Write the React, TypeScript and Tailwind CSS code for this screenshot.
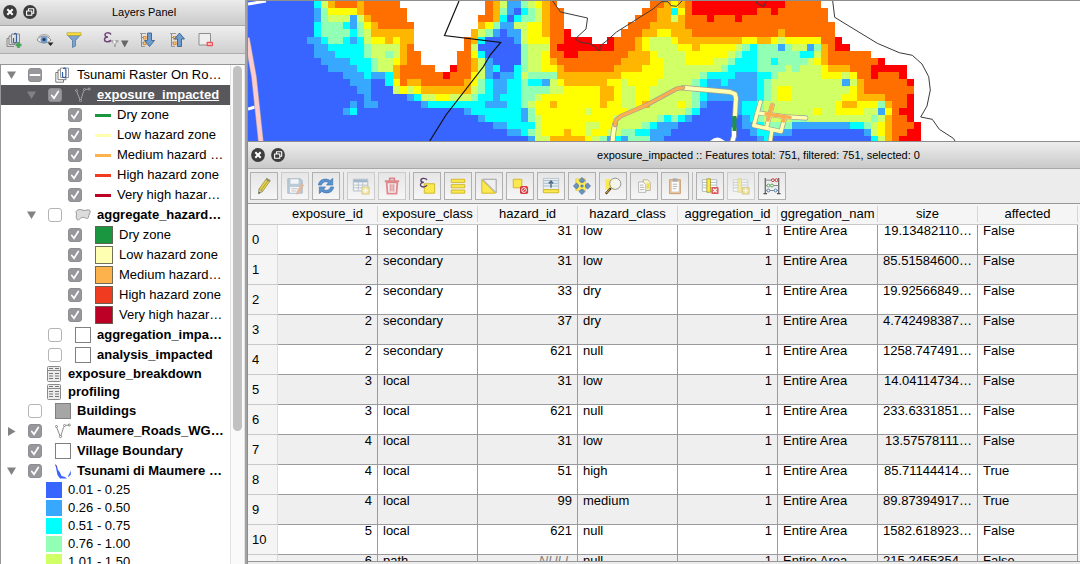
import React from "react";

/* ---------- Map ---------- */

const PALETTE: Record<string, string> = {
  B: "#3864ff",
  b: "#38a8ff",
  c: "#00ffff",
  g: "#91ffb4",
  l: "#d0ff66",
  y: "#ffff00",
  o: "#ffb600",
  O: "#ff6f00",
  r: "#ff0000",
  w: "#ffffff",
};

/* Run-length rows of the hazard raster: colour key followed by cell count. */
const RASTER: string[] = [
  "B1c1l1o1O3o1O5w12O1o1l1b2 g1l1y1o1O1w13O2o1y1o1O1r13O1 O4",
  "B1b1g1y4o1O6w11O1o1g1b1B1 c1g1l1o1O2w11O2o2c1y1O1r9O2r1O2 O5",
  "B1b1g1l3b1l1o1O5w10O2o1c1B1c1 g2l1o1O2w10O3o2l1o1O3r1O3r1O7 O5",
  "B1c1g3c1b1g1y1o1O5w9o1y1g1b2l1 l1y2o1O2w9O3o5O15 O6",
  "B1c1g4c1g1l1o6w8o1l1g1b1B1b2 l1y2o1O2r1w7O3o2y2o3O12o1O1 O6",
  "b2c1g2c1b1c1l1y2o1y1o2w7O1o1c1B4b1 l1y3O2r4w2r1O3o1y1l3y1o9y2o2y1l1y1 y4O2r1",
  "B1b2c5g1l4o1O1w7O1l1B6 g1l3O1r8O3o1y1l4y2o1y5l1g1c1g3b1g1 l2b1g1o1O1r2",
  "B1b3c4g1l2g1l1o1O2w5O2y1c1B5 g1l2y1O2r2O7o3y1l4y6l1g1c2g5 g1c2l1o1O6",
  "B2b4c3g1l2y1o1O2w5O2o1l1b1B4 g1l2y1o1O9o4y2l3y4l2g1c3g2c1g2 g2l1y1o1O7r1",
  "B3b4c2g1l2o1O5w2r1O2o1l1b1c1B2c1 g1l2y2o1O7o4y3l8g1c4g4l1 g1l3y1o3O3r5",
  "B5b3c1b2c1o1O6r1O3y1l1b1B1b2c1 l1g4o9y6l5g1c4b3c2g1l2 l4y3l1y1O2r1O3r1",
  "B6b3B2c1y1O1o2O6o1y1g1c1b2c2 g1c2b1l1y1o6y2l1y4l5g1c1b2c1b4c1g1l3 l7b1l1o1O6r1",
  "B7b2B3l1y1l1y1o7l1g1c1b2c2 g4l2y5o2y1l2y2l6g1c1b7c1g1l1y2 l8y1o1O7",
  "B8b1B5b1c1l2y2l3g1c2b1c3 g2l1y8o2y1l2y2l6g1c1b7c1g1l1y2 l7y2o4O3r1",
  "B6b1B1b2B6b1c8b3c2 g1l1y2o1y6o1y2l2y1o1l4y1l1g1b1B4b1c2g1l4 l6y1o2y3g1o1O2r1",
  "B5b1c1B15b1c7 b1g1y7l1y5l8g1c1B5b1c2g1l4 l3y1l2y4l2b1y1O1r2",
  "B24b1c5 b1g1l1y8y2l6g1c1g1c1b1B7b1c1g1l4 g2l9g1l1o1O2r1",
  "B26b2c2 c2l1y6l2y2l4g1c1b3B8B1b2c1g4 b8c2g1l1y1o1O3r1",
  "B28b2 c1g1l1y3o1y2l1y2l2g2c2b3B9B2b1c2b3 B10b1l1y1o1O2r2",
  "B30 B1b1l2o5y1l1g1b1c1b1g3b2B10B3b1c1B3 B11c1l1o1O1r3",
];

const CELL = 7.14;

function Raster() {
  const rects: React.ReactElement[] = [];
  RASTER.forEach((row, r) => {
    const top = Math.round(1 + r * 7.12);
    const bottom = Math.round(1 + (r + 1) * 7.12);
    let k = -1;
    for (const m of row.matchAll(/([A-Za-z])(\d+)/g)) {
      const n = Number(m[2]);
      const left = Math.round(314 + k * CELL);
      const right = Math.round(314 + (k + n) * CELL);
      rects.push(
        <rect key={`${r}-${k}`} x={left} y={top} width={right - left} height={bottom - top} fill={PALETTE[m[1]]} />
      );
      k += n;
    }
  });
  return <g shapeRendering="crispEdges">{rects}</g>;
}

function Road({ points, color, width = 4 }: { points: string; color: string; width?: number }) {
  return (
    <g fill="none" strokeLinejoin="round" strokeLinecap="round">
      <polyline points={points} stroke="#a5a08c" strokeWidth={width + 1.5} />
      <polyline points={points} stroke={color} strokeWidth={width} />
    </g>
  );
}

const LANES = "M760.3 102L753.8 125.5L781 131.5L785 117M757 112.7L785 116.7L806 118M771.7 131L770 143M772.3 105L766.7 127";

function MapCanvas() {
  return (
    <div className="h-[142px] shrink-0 overflow-hidden border-t border-b border-[#8e8e8e] bg-white">
      <svg className="block h-[140px] w-[832px]" viewBox="248 1 832 140" role="img" aria-label="Hazard map">
        <rect x="248" y="1" width="60" height="140" fill="#3864ff" />
        <Raster />
        <path d="M248 4L266 1" stroke="#fff" strokeWidth="3" />
        <path d="M248 109L255 107" stroke="#fff" strokeWidth="3" />
        <polyline points="247,38 254,77 261,143" fill="none" stroke="#a9a3b8" strokeWidth="5.5" />
        <polyline points="247,38 254,77 261,143" fill="none" stroke="#ffcccc" strokeWidth="4.2" />
        <g fill="none" stroke="#111" strokeWidth="1.2">
          <polyline points="459,1 444.5,35.5 500.7,42.5 490.5,54.5 483.5,66.5 446,115 429.7,141" />
        </g>
        <g fill="none" stroke="#3b3b3b" strokeWidth="1">
          <polyline points="552.7,1 560.5,12 587.5,18 586,29 575,39 581,42.5 589,43.5 596,47 597.5,50.3 600,50.3 600,46 607,40.5 616.5,32 653,9 661.5,1.7 668,1.7 671,5.7 676.5,6.3 682,1" />
          <polyline points="756,1 757,3.5 763.7,6.7 766,1" />
          <polyline points="832.7,1 834.7,17.3 877.3,43.3 899.3,52.7 912.3,55.3 922,64 928.7,76.7 930.3,90 927,106 920.7,117 932.3,119.3 939.3,129.3 953.3,138.3 955,141" />
        </g>
        <path d="M710 141q5-5 10-3l5 3z" fill="#fff" />
        <Road points="734,129 734,136 732,143" color="#ffffff" />
        <Road points="612.5,143 613.5,132 615,124" color="#ffffb2" />
        <Road points="683,87.7 730,92 735,94 736,98 735,116" color="#ffffb2" />
        <Road points="615,125 616,120 621,116 646.7,105 676.7,88.8 683,87.7" color="#fdae52" width={3} />
        <path d="M734.5 116V131" stroke="#1a9641" strokeWidth="4" />
        <g fill="none" strokeLinejoin="round" strokeLinecap="round">
          <path d={LANES} stroke="#a5a08c" strokeWidth="4.8" />
          <path d={LANES} stroke="#ffffb2" strokeWidth="3.4" />
          <path d="M772.3 105L768 120M766 114L790 117.4M784.5 117L783.5 121" stroke="#fdae52" strokeWidth="3.4" />
        </g>
      </svg>
    </div>
  );
}

/* ---------- Shared title bar ---------- */

function TitleBar({ title, className }: { title: string; className: string }) {
  return (
    <header className="flex h-[26px] shrink-0 items-center gap-[6px] border-b border-[#a8a8a8] bg-linear-to-b from-[#ececec] to-[#c9c9c9] pb-px pl-[3px]">
      <button aria-label={`Close ${title}`} className="size-[14px] shrink-0">
        <svg viewBox="0 0 14 14" className="size-[14px]">
          <circle cx="7" cy="7" r="6.9" fill="#3d3d3d" />
          <path d="M4.3 4.3l5.400 5.400m0-5.400l-5.400 5.400" stroke="#fff" strokeWidth="2" />
        </svg>
      </button>
      <button aria-label={`Undock ${title}`} className="size-[14px] shrink-0">
        <svg viewBox="0 0 14 14" className="size-[14px]">
          <circle cx="7" cy="7" r="6.9" fill="#3d3d3d" />
          <path d="M5.5 5.8V3.8h5.2v4.4H9M3.6 6h5.2v4.2H3.6z" fill="none" stroke="#fff" strokeWidth="1.1" strokeLinejoin="round" />
        </svg>
      </button>
      <h2 className={`min-w-0 flex-1 truncate text-center text-[11px] leading-[14px] ${className}`}>{title}</h2>
    </header>
  );
}

/* ---------- Layers panel ---------- */

type IconKind = "group" | "vector" | "blob" | "table" | "raster" | "line" | "swatch" | "box";
type Layer = {
  name: string;
  level: 0 | 1 | 2;
  icon: IconKind;
  color?: string;
  bold?: boolean;
  selected?: boolean;
  arrow?: "down" | "right";
  check: "on" | "off" | "mixed";
};

const LAYERS: Layer[] = [
  { name: "Tsunami Raster On Ro…", level: 0, icon: "group", arrow: "down", check: "mixed" },
  { name: "exposure_impacted", level: 1, icon: "vector", bold: true, selected: true, arrow: "down", check: "on" },
  { name: "Dry zone", level: 2, icon: "line", color: "#1a9641", check: "on" },
  { name: "Low hazard zone", level: 2, icon: "line", color: "#ffffb2", check: "on" },
  { name: "Medium hazard …", level: 2, icon: "line", color: "#feb24c", check: "on" },
  { name: "High hazard zone", level: 2, icon: "line", color: "#f03b20", check: "on" },
  { name: "Very high hazar…", level: 2, icon: "line", color: "#bd0026", check: "on" },
  { name: "aggregate_hazard…", level: 1, icon: "blob", bold: true, arrow: "down", check: "off" },
  { name: "Dry zone", level: 2, icon: "swatch", color: "#1a9641", check: "on" },
  { name: "Low hazard zone", level: 2, icon: "swatch", color: "#ffffb2", check: "on" },
  { name: "Medium hazard…", level: 2, icon: "swatch", color: "#feb24c", check: "on" },
  { name: "High hazard zone", level: 2, icon: "swatch", color: "#f03b20", check: "on" },
  { name: "Very high hazar…", level: 2, icon: "swatch", color: "#bd0026", check: "on" },
  { name: "aggregation_impa…", level: 1, icon: "box", color: "#ffffff", bold: true, check: "off" },
  { name: "analysis_impacted", level: 1, icon: "box", color: "#ffffff", bold: true, check: "off" },
];

const BASE_LAYERS: Layer[] = [
  { name: "Buildings", level: 0, icon: "box", color: "#a6a6a6", bold: true, check: "off" },
  { name: "Maumere_Roads_WG…", level: 0, icon: "vector", bold: true, arrow: "right", check: "on" },
  { name: "Village Boundary", level: 0, icon: "box", color: "#ffffff", bold: true, check: "on" },
  { name: "Tsunami di Maumere …", level: 0, icon: "raster", bold: true, arrow: "down", check: "on" },
];

const CLASSES = [
  { label: "0.01 - 0.25", color: "#3864ff" },
  { label: "0.26 - 0.50", color: "#38a8ff" },
  { label: "0.51 - 0.75", color: "#00ffff" },
  { label: "0.76 - 1.00", color: "#91ffb4" },
  { label: "1.01 - 1.50", color: "#d0ff66" },
];

function LayerIcon({ kind, color, selected }: { kind: IconKind; color?: string; selected?: boolean }) {
  const ink = selected ? "#a9a9a9" : "#808080";
  return (
    <svg
      viewBox={kind === "swatch" ? "0 0 18 18" : "0 0 16 16"}
      className={kind === "swatch" ? "size-[18px] shrink-0" : "size-4 shrink-0"}
      aria-hidden="true"
    >
      {kind === "group" && (
        <g fill="none">
          <path d="M3 5.500H.8v9.700h7.700V13M5.500 3H3v9.700h8V10.500" stroke="#777" />
          <path d="M5.500 1h8v9.500h-8z" stroke="#999" />
          <path d="M7.500 5v4a1.700 1.700 0 003.400 0V2.800C10.900.8 8.800.8 8.500 2" stroke="#2c5caa" strokeWidth="1.200" />
        </g>
      )}
      {kind === "vector" && (
        <g fill="none" stroke={ink} strokeWidth=".9">
          <path d="M1.500 4L5.500 14L8.500 4.500L10 2.500L14 2" />
          <g fill={selected ? "#58575c" : "#fff"}>
            <circle cx="1.500" cy="3.500" r="1" />
            <circle cx="5.500" cy="13.500" r="1.100" />
            <circle cx="9.500" cy="2.500" r="1" />
            <circle cx="14.300" cy="2" r="1" />
          </g>
        </g>
      )}
      {kind === "blob" && (
        <path d="M1 4.500C2 2.500 5 2 8 3.200S13 1.500 15 3.500C16 6 13 8 13.500 10.500C12 13 9.500 9.500 7 10.500S3.500 14 2 12.500C0 10 2.500 8 1 4.500z" fill="#dcdcdc" stroke="#999" />
      )}
      {kind === "raster" && (
        <g fill="#3864ff">
          <path d="M.3 1.500L2 3l.8 3.500L5 9.500l1.500 3.500 3.500 1 2 1.500H5L2.500 12z" />
          <path d="M13 13l1-1.500 1.800-4v4L13.500 14z" />
          <path d="M.3 1.500L1.800 4" stroke="#8c3b4a" strokeWidth=".8" />
        </g>
      )}
      {kind === "line" && <rect x="0" y="7" width="16" height="3" fill={color} />}
      {kind === "box" && <rect x=".5" y=".5" width="15" height="15" fill={color} stroke="#808080" />}
      {kind === "swatch" && <rect x=".5" y=".5" width="17" height="17" fill={color} stroke="#4d4d3d" strokeOpacity=".8" />}
      {kind === "table" && (
        <g>
          <rect x="1.500" y=".5" width="13" height="15" rx="1" fill="#ececec" stroke="#8a8a8a" />
          <path d="M2 4.500h12" stroke="#8a8a8a" />
          <path d="M3 2.500h4M9 2.500h4M3 7.500h4M9 7.500h4M3 10h4M9 10h4M3 12.500h4M9 12.500h4" stroke="#777" />
        </g>
      )}
    </svg>
  );
}

function CheckBox({ state, label }: { state: Layer["check"]; label: string }) {
  return (
    <span className="relative size-[14px] shrink-0">
      <input
        type="checkbox"
        aria-label={label}
        defaultChecked={state !== "off"}
        className="block size-[14px] appearance-none rounded-[3px] border border-[#b4b4b4] bg-white checked:border-[#8e8d92] checked:bg-[#98979c]"
      />
      {state !== "off" && (
        <svg viewBox="0 0 14 14" className="pointer-events-none absolute inset-0 size-[14px]" aria-hidden="true">
          <path
            d={state === "on" ? "M3.800 7.500L6 10.200L10.300 3.500" : "M2.500 7h9"}
            fill="none"
            stroke="#fff"
            strokeWidth={state === "on" ? 1.7 : 2}
            strokeLinecap="round"
          />
        </svg>
      )}
    </span>
  );
}

const INDENT = ["pl-[5px]", "pl-[25px]", "pl-[45px]"];

function LayerRow({ layer }: { layer: Layer }) {
  return (
    <li className={`flex h-5 items-center ${INDENT[layer.level]} ${layer.selected ? "bg-[#58575c] text-white" : ""}`}>
      <span className="w-[22px] shrink-0">
        {layer.arrow && (
          <button aria-label={`Toggle ${layer.name}`} className="block size-[11px]">
            <svg viewBox="0 0 11 11" className="size-[11px]">
              <path d={layer.arrow === "down" ? "M1 1.500h9L5.500 9z" : "M2 1l7.500 4.500L2 10z"} fill="#828282" />
            </svg>
          </button>
        )}
      </span>
      <CheckBox state={layer.check} label={layer.name} />
      <span className="w-[13px] shrink-0" />
      <LayerIcon kind={layer.icon} color={layer.color} selected={layer.selected} />
      <span className={`pl-[6px] whitespace-nowrap ${layer.bold ? "font-bold" : ""} ${layer.selected ? "underline" : ""}`}>{layer.name}</span>
    </li>
  );
}

function Arrow({ up }: { up?: boolean }) {
  return (
    <svg viewBox="0 0 16 16" className="size-4" aria-hidden="true">
      <path d="M2.500 1v13M2.500 5.500h2M2.500 11h2" stroke="#8a8a8a" fill="none" />
      <path d="M1 1.500h6M2 14.500h4" stroke="#999" />
      <rect x="4.500" y="4.500" width="2.500" height="2.500" fill="#fbd08a" stroke="#f08a1d" />
      <rect x="4.500" y="10" width="2.500" height="2.500" fill="#fbd08a" stroke="#f08a1d" />
      <path
        d={up ? "M10.500 1L15.500 7h-3v7.500h-4V7h-3z" : "M8.500 1h4v7.500h3L10.500 14.500L5.500 8.500h3z"}
        fill="#6f9bcd"
        stroke="#38628f"
        strokeWidth=".9"
      />
    </svg>
  );
}

function LayerToolbar() {
  return (
    <div className="flex h-[28px] shrink-0 items-center border-b border-[#aeaeae] bg-linear-to-b from-[#efefef] to-[#cfcfcf] pl-[6px]">
      <button aria-label="Add group" className="w-[30px]">
        <svg viewBox="0 0 16 16" className="size-4">
          <path d="M3 6.500H1v8h7M5.500 4H3v8.500h6M5.500 2h8v9h-8z" fill="none" stroke="#888" />
          <path d="M7.500 6v3.500a1.500 1.500 0 003 0V3C10.500 1 8.300 1 8.300 2.500" fill="none" stroke="#3a5f99" strokeWidth="1.200" />
          <path d="M12.500 10v6M9.500 13h6" stroke="#4aa35a" strokeWidth="2.600" />
        </svg>
      </button>
      <button aria-label="Manage visibility" className="w-[30px]">
        <svg viewBox="0 0 18 16" className="h-4 w-[18px]">
          <path d="M1 8c3-5 10-5.500 14 0-4 4-10 4-14 0z" fill="#eee" stroke="#888" />
          <circle cx="8" cy="7.700" r="3.500" fill="#6b9bcc" />
          <circle cx="8" cy="7.500" r="1.600" fill="#29384e" />
          <path d="M2 5.500C5 1.500 11 1.500 14 5" fill="none" stroke="#aaa" />
          <path d="M11.500 10.500h6L14.500 14z" fill="#222" />
        </svg>
      </button>
      <button aria-label="Filter legend" className="w-[37px]">
        <svg viewBox="0 0 16 16" className="size-4">
          <path d="M1.500 3L6.500 8.500V15.500L9.500 14V8.500L14.500 3z" fill="#7da4cf" stroke="#456f9e" strokeWidth=".7" />
          <rect x="1" y=".8" width="14" height="2.600" fill="#f7de3d" stroke="#b39a22" strokeWidth=".6" />
        </svg>
      </button>
      <button aria-label="Filter by expression" className="w-[36px]">
        <svg viewBox="0 0 26 18" className="h-[18px] w-[26px]">
          <path d="M8 3.500C6.500 1 1.500 1.500 2 4c.2 1.300 1.500 2 3 2-2 0-3.700 1-3.500 2.800C1.700 11.500 6.500 11.500 8 9" fill="none" stroke="#6d4377" strokeWidth="1.500" />
          <path d="M8 9h7.500v2l-2.500 1.500v3.500h-2v-3.500L8 11z" fill="#aaa" />
          <path d="M10 9.500h2.500v3H11z" fill="#fff" />
          <path d="M18 9.500h7.500L21.700 16.500z" fill="#666" />
        </svg>
      </button>
      <button aria-label="Expand all" className="w-[30px]"><Arrow /></button>
      <button aria-label="Collapse all" className="w-[28px]"><Arrow up /></button>
      <button aria-label="Remove layer" className="w-[30px]">
        <svg viewBox="0 0 16 16" className="size-4">
          <path d="M2 1.500h11.500v11.500H2z" fill="#efefef" stroke="#8d8d8d" />
          <rect x="9.500" y="9.800" width="6.500" height="4.400" rx="1" fill="#ec5256" />
          <path d="M10.800 12h4" stroke="#fff" strokeWidth="1.200" />
        </svg>
      </button>
    </div>
  );
}

function LayersPanel() {
  return (
    <aside className="flex w-[247px] shrink-0 flex-col border-r-2 border-[#a2a2a2] bg-[#e6e6e6]">
      <TitleBar title="Layers Panel" className="" />
      <LayerToolbar />
      <div className="mt-[10px] flex min-h-0 flex-1 border-t border-l border-[#969696] bg-white">
        <ul className="min-w-0 flex-1 overflow-hidden text-[13px] leading-5">
          {LAYERS.map((layer, i) => (
            <LayerRow key={i} layer={layer} />
          ))}
          {["exposure_breakdown", "profiling"].map((name) => (
            <li key={name} className="flex h-[18px] items-center gap-[6px] pl-[45px] font-bold">
              <LayerIcon kind="table" />
              {name}
            </li>
          ))}
          {BASE_LAYERS.map((layer) => (
            <LayerRow key={layer.name} layer={layer} />
          ))}
          {CLASSES.map((c) => (
            <li key={c.label} className="flex h-[18px] items-center gap-[6px] pl-[45px]">
              <span className="size-4 shrink-0" style={{ backgroundColor: c.color }} />
              {c.label}
            </li>
          ))}
        </ul>
        <div className="w-[15px] shrink-0 border-x border-[#e3e3e3] bg-[#fafafa] px-[2px] pt-px">
          <div className="h-[365px] w-[9px] rounded-full bg-[#c1c1c1]" />
        </div>
      </div>
    </aside>
  );
}

/* ---------- Attribute table ---------- */

const TOOLS: { name: string; faded?: boolean; art?: React.ReactElement }[] = [
  {
    name: "Toggle editing",
    art: (
      <g>
        <path d="M13 1.500l4 2.500L8.500 16 4 18.500 4.700 13z" fill="#e9d648" stroke="#8d8545" strokeWidth=".8" />
        <path d="M15 3L6.500 15" stroke="#b9a736" strokeWidth="1.200" />
        <path d="M13 1.500l4 2.500-1 1.500-4-2.500z" fill="#8a8a8a" />
        <path d="M4.700 13l3.800 3L4 18.500z" fill="#d9c9a0" stroke="#777" strokeWidth=".5" />
        <path d="M4.300 16.500L4 18.500l1.800-1z" fill="#444" />
      </g>
    ),
  },
  {
    name: "Save edits",
    faded: true,
    art: (
      <g>
        <path d="M2 2h14l2 2v14H2z" fill="#88a9c4" stroke="#5d7f9d" />
        <path d="M5 2.500h9v5H5zM4.500 11h11v6.500h-11z" fill="#fff" />
        <path d="M6 13h7M6 15.500h5" stroke="#888" />
        <path d="M17.500 7.500l2 1.500-5 9-2.500 1 .3-3z" fill="#e58c4a" stroke="#b65c33" strokeWidth=".6" />
      </g>
    ),
  },
  {
    name: "Reload",
    art: (
      <g fill="#5a92cc" stroke="#3568a5" strokeWidth=".6">
        <path d="M1.500 9C2 2.500 10 .5 14.500 4L17.500 1.500v7.500H10.500L12.700 6.300C9.800 4.200 6 5.500 5 9z" />
        <path d="M18.500 11C18 17.500 10 19.500 5.500 16L2.500 18.500V11H9.500L7.300 13.700c2.900 2.100 6.700.8 7.700-2.700z" />
      </g>
    ),
  },
  { name: "|" },
  {
    name: "Add feature",
    faded: true,
    art: (
      <g>
        <path d="M1.500 2.500h16v13h-16z" fill="#fff" stroke="#6a8398" />
        <path d="M2 3h15v3H2z" fill="#5886b5" />
        <path d="M2 9h15M2 12h15M7 6v9M12 6v9" stroke="#7e93a5" />
        <path d="M11 11h8v8h-8z" fill="#f0dc4a" stroke="#b8a43c" />
        <path d="M15 12v6M12 15h6" stroke="#fff" strokeWidth="1.500" />
      </g>
    ),
  },
  {
    name: "Delete selected",
    faded: true,
    art: (
      <g fill="none" stroke="#d3262c">
        <path d="M4 6h12l-1 12.500H5z" strokeWidth="2" />
        <path d="M2 4.500h16M7.500 3.500v-2h5v2" strokeWidth="2" />
        <path d="M8 8v8M10 8v8M12 8v8" strokeWidth="1.200" />
      </g>
    ),
  },
  { name: "|" },
  {
    name: "Select by expression",
    art: (
      <g>
        <path d="M7 7.500h11.500V18H7z" fill="#fce94f" stroke="#cdb421" />
        <path d="M10 3.200C8.500 .7 3 .9 3.200 3.700c.1 1.400 1.500 2.200 3.300 2.200-2.300 0-4 1-3.700 3 .4 3 5.500 2.800 7.200 0" fill="none" stroke="#573b66" strokeWidth="1.500" />
      </g>
    ),
  },
  {
    name: "Select all",
    art: (
      <g fill="#fce94f" stroke="#c9ae18" strokeWidth=".9">
        <path d="M2.500 2.500h15v3.500h-15zM2.500 8.500h15V12h-15zM2.500 14.500h15V18h-15z" />
      </g>
    ),
  },
  {
    name: "Invert selection",
    art: (
      <g>
        <path d="M3 2.500h15v15z" fill="#efefef" stroke="#999" />
        <path d="M2 3v15h15z" fill="#fce94f" stroke="#cdb421" />
      </g>
    ),
  },
  {
    name: "Deselect all",
    art: (
      <g>
        <path d="M2.500 2.500H12V12H2.500z" fill="#fce94f" stroke="#cdb421" />
        <rect x="10" y="10" width="9" height="9" rx="2" fill="#d8393e" />
        <circle cx="14.500" cy="14.500" r="2.700" fill="none" stroke="#fff" />
        <path d="M12.500 16.500l4-4" stroke="#fff" />
      </g>
    ),
  },
  {
    name: "Move selection to top",
    art: (
      <g>
        <path d="M1.500 1.500h17V14h-17z" fill="#e9eef2" stroke="#b5c0c9" />
        <path d="M2 4h16M2 7h16M2 10h16" stroke="#a3b8c8" />
        <path d="M1.500 14h17v3.500h-17z" fill="#fce94f" stroke="#cdb421" />
        <path d="M10 12V5M7.500 7.200L10 4.500l2.500 2.700" stroke="#4f6f8d" strokeWidth="1.600" fill="none" />
      </g>
    ),
  },
  {
    name: "Pan to selected",
    art: (
      <g>
        <path d="M3 2h11v13H3z" fill="#fce94f" stroke="#d9c63c" strokeWidth=".6" />
        <path d="M10 .5l3.300 3.300L11.300 6H8.700L6.700 3.800zM10 19.500l3.300-3.300L11.300 14H8.700l-2 2.200zM.5 10l3.300-3.300L6 8.700v2.600l-2.200 2zM19.500 10l-3.300-3.300L14 8.700v2.600l2.200 2z" fill="#6a92c2" stroke="#40689a" strokeWidth=".7" />
        <circle cx="10" cy="10" r="1.800" fill="#5582b6" />
      </g>
    ),
  },
  {
    name: "Zoom to selected",
    art: (
      <g>
        <path d="M1.500 2.500h10V14h-10z" fill="#fce94f" />
        <path d="M7.500 12.500L2 18.500" stroke="#222" strokeWidth="2.400" />
        <path d="M6.500 13.600L2.500 18" stroke="#e5ad3c" strokeWidth="1.200" />
        <circle cx="12.500" cy="7.500" r="6.200" fill="#f5f5ee" fillOpacity=".92" stroke="#8a8a8a" />
      </g>
    ),
  },
  {
    name: "Copy rows",
    art: (
      <g>
        <path d="M9 3h5l3 3v9H9z" fill="#f7f3c2" stroke="#b5b29b" />
        <path d="M4 5.500h5l3 3V17H4z" fill="#fff" stroke="#b0b0b0" />
        <path d="M5.500 9h4M5.500 11.500h5M5.500 14h5" stroke="#aaa" />
        <path d="M13 7h3v6h-3z" fill="#f2df4f" />
      </g>
    ),
  },
  {
    name: "Paste rows",
    art: (
      <g>
        <path d="M4 3h12v15.500H4z" fill="#ecc79b" stroke="#c79a6b" />
        <path d="M6 5h8.500v11.500H6z" fill="#fff" stroke="#bbb" strokeWidth=".5" />
        <path d="M7.500 1.500h5V5h-5z" fill="#aaa" />
        <path d="M7.500 8h5M7.500 10.500h5M7.500 13h4" stroke="#aaa" />
      </g>
    ),
  },
  { name: "|" },
  {
    name: "Delete column",
    art: (
      <g>
        <path d="M1.500 3h16v13h-16z" fill="#fff" stroke="#a8b5c0" />
        <path d="M2 6h15M2 9h15M2 12h15" stroke="#a5b8c6" />
        <path d="M6.500 2h4v15h-4z" fill="#fce94f" stroke="#a8a02c" />
        <rect x="11.500" y="11" width="8" height="8" rx="1" fill="#dd5b60" />
        <path d="M13.500 13l4 4m0-4l-4 4" stroke="#fff" strokeWidth="1.400" />
      </g>
    ),
  },
  {
    name: "New column",
    faded: true,
    art: (
      <g>
        <path d="M1.500 3h16v13h-16z" fill="#fff" stroke="#a8b5c0" />
        <path d="M2 6h15M2 9h15M2 12h15" stroke="#8fa6b8" />
        <path d="M6.500 2h4v15h-4z" fill="#fce94f" stroke="#c9c04c" />
        <path d="M11.500 11.500h7.500v7.500h-7.500z" fill="#e6cc3c" stroke="#b8a43c" />
        <path d="M15.200 12.500v5.500M12.500 15.200h5.500" stroke="#fff" strokeWidth="1.300" />
      </g>
    ),
  },
  {
    name: "Field calculator",
    art: (
      <g fill="none">
        <path d="M2.500 1v18M17.500 1v18M.5 18.500h4M15.500 18.500h4" stroke="#505050" strokeWidth="1.200" />
        <path d="M2.500 3.500h15M2.500 9.500h15M2.500 15h15" stroke="#7c7c7c" />
        <g strokeWidth="1.100" fill="#f5f5f5">
          <g stroke="#cf3038"><circle cx="11" cy="3.500" r="1.600" /><circle cx="15" cy="3.500" r="1.600" /></g>
          <g stroke="#53a85b"><circle cx="6" cy="9.500" r="1.600" /><circle cx="10" cy="9.500" r="1.600" /></g>
          <g stroke="#4e7db0"><circle cx="6" cy="15" r="1.600" /><circle cx="14" cy="15" r="1.600" /></g>
        </g>
      </g>
    ),
  },
];

const COLUMNS = ["exposure_id", "exposure_class", "hazard_id", "hazard_class", "aggregation_id", "ggregation_nam", "size", "affected"];

const ROWS: string[][] = [
  ["1", "secondary", "31", "low", "1", "Entire Area", "19.13482110…", "False"],
  ["2", "secondary", "31", "low", "1", "Entire Area", "85.51584600…", "False"],
  ["2", "secondary", "33", "dry", "1", "Entire Area", "19.92566849…", "False"],
  ["2", "secondary", "37", "dry", "1", "Entire Area", "4.742498387…", "False"],
  ["2", "secondary", "621", "null", "1", "Entire Area", "1258.747491…", "False"],
  ["3", "local", "31", "low", "1", "Entire Area", "14.04114734…", "False"],
  ["3", "local", "621", "null", "1", "Entire Area", "233.6331851…", "False"],
  ["4", "local", "31", "low", "1", "Entire Area", "13.57578111…", "False"],
  ["4", "local", "51", "high", "1", "Entire Area", "85.71144414…", "True"],
  ["4", "local", "99", "medium", "1", "Entire Area", "89.87394917…", "True"],
  ["5", "local", "621", "null", "1", "Entire Area", "1582.618923…", "False"],
  ["6", "path", "NULL", "null", "1", "Entire Area", "215.2455354…", "False"],
];

const NUMERIC = [true, false, true, false, true, false, true, false];

function AttributeTable() {
  return (
    <section className="mt-px flex min-h-0 flex-1 flex-col bg-[#ececec] pb-[2px]">
      <TitleBar title="exposure_impacted :: Features total: 751, filtered: 751, selected: 0" className="pl-[146px]" />
      <div className="flex h-[34px] shrink-0 items-center gap-[3px] pl-[2px]">
        {TOOLS.map((tool, i) =>
          tool.art ? (
            <button
              key={i}
              aria-label={tool.name}
              className={`flex size-7 shrink-0 items-center justify-center border bg-linear-to-b from-[#e6e6e6] to-[#f6f6f6] ${
                tool.faded ? "border-[#cbcbcb]" : "border-[#b0b0b0]"
              }`}
            >
              <svg viewBox="0 0 20 20" className={tool.faded ? "size-[18px] opacity-50" : "size-[18px]"} aria-hidden="true">
                {tool.art}
              </svg>
            </button>
          ) : (
            <span key={i} className="h-7 w-px shrink-0 bg-[#bcbcbc]" />
          )
        )}
      </div>
      <div className="min-h-0 flex-1 overflow-hidden border-t border-b border-[#979797] bg-[#f5f5f5] pr-[2px]">
        <table className="w-full table-fixed border-separate border-spacing-0 text-[13px]">
          <colgroup>
            <col className="w-[30px]" />
          </colgroup>
          <thead>
            <tr className="h-[21px]">
              <th aria-label="Row" className="border-b border-[#c9c9c9] p-0" />
              {COLUMNS.map((c) => (
                <th key={c} scope="col" className="border-b border-[#c9c9c9] p-0 font-normal">
                  <span className="block border-r border-[#d6d6d6] text-center leading-4 whitespace-nowrap">{c}</span>
                </th>
              ))}
            </tr>
          </thead>
          <tbody>
            {ROWS.map((row, r) => (
              <tr key={r} className={r % 2 ? "bg-[#efefef]" : "bg-white"}>
                <th scope="row" className="h-[30px] border-r border-b border-r-[#dcdcdc] border-b-[#c9c9c9] bg-[#f5f5f5] p-0 pl-1 text-left font-normal">
                  {r < 11 ? r : ""}
                </th>
                {row.map((cell, i) => (
                  <td
                    key={i}
                    className={`h-[30px] border-r border-b border-[#9b9a9f] px-[5px] py-0 align-top leading-[12px] whitespace-nowrap ${
                      NUMERIC[i] ? "text-right" : "text-left"
                    } ${cell === "NULL" ? "text-[#808080] italic" : ""}`}
                  >
                    {cell}
                  </td>
                ))}
              </tr>
            ))}
          </tbody>
        </table>
      </div>
    </section>
  );
}

export default function App() {
  return (
    <div className="flex h-screen overflow-hidden bg-[#ececec] font-['Liberation_Sans',Arial,sans-serif] text-black">
      <LayersPanel />
      <main className="flex min-w-0 flex-1 flex-col border-l border-[#8e8e8e]">
        <MapCanvas />
        <AttributeTable />
      </main>
    </div>
  );
}
